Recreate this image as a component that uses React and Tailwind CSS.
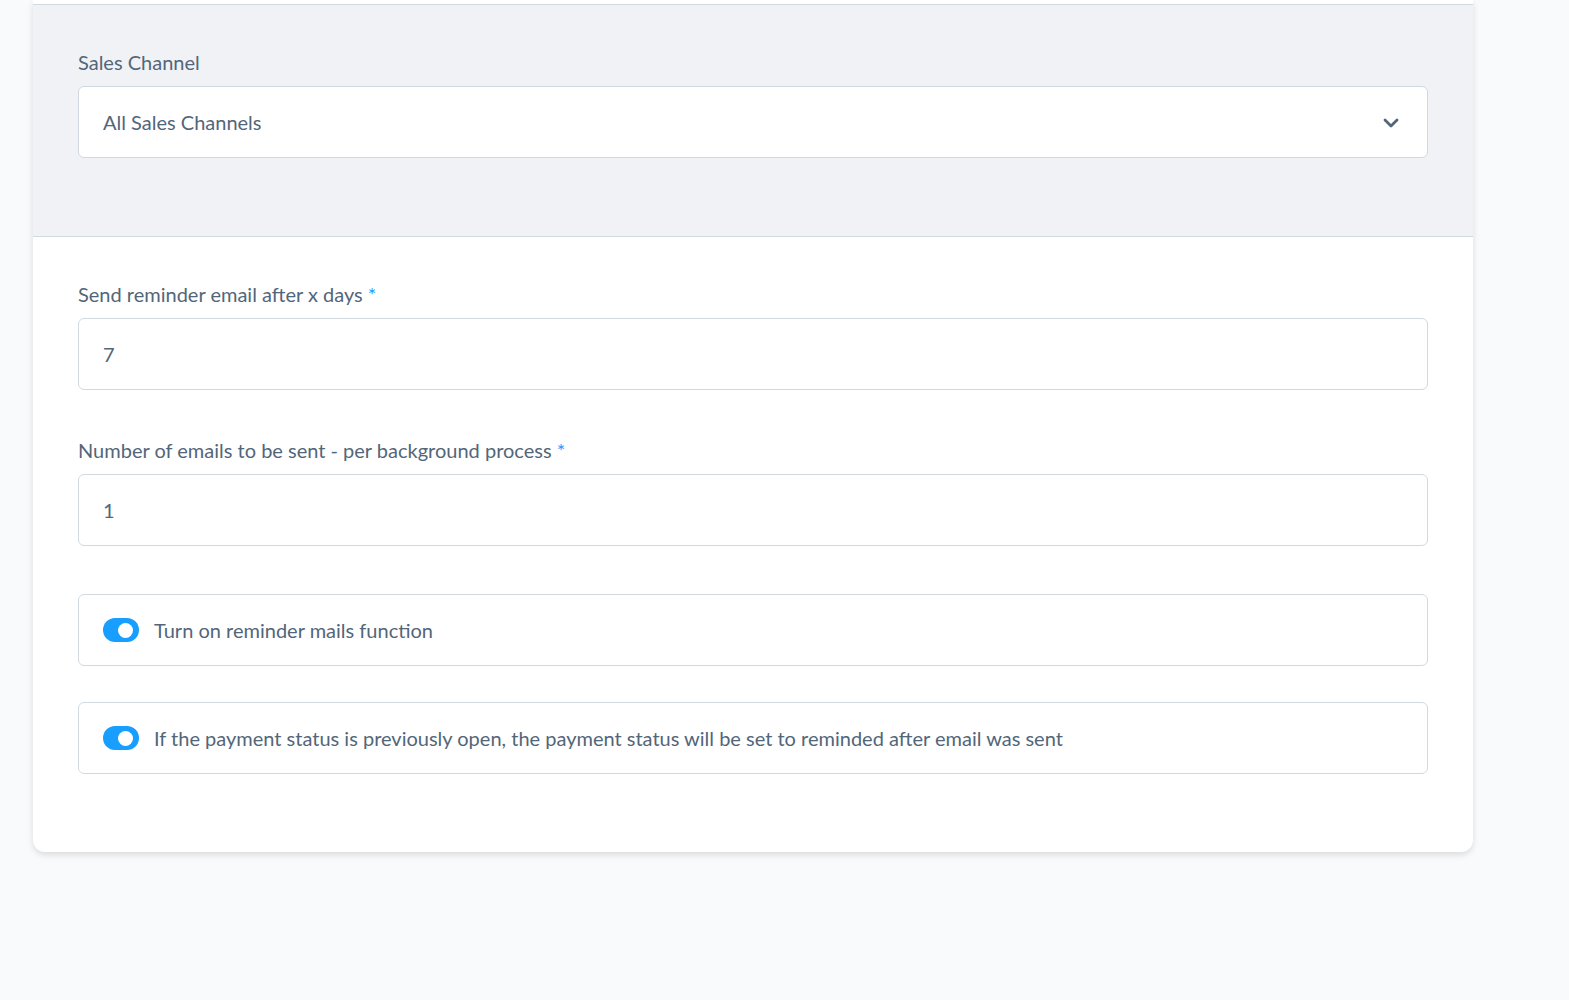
import React from "react";

const font = { fontFamily: "Lato, 'Noto Sans', sans-serif" };

function Label({ children, required }) {
  return (
    <div className="h-[30px] mb-[9px] flex items-center text-[20px] leading-[30px] text-[#52667a]">
      <span>{children}</span>
      {required && <span className="ml-[5px] text-[#189eff] text-[20px] leading-[30px]">*</span>}
    </div>
  );
}

function Input({ value }) {
  return (
    <div className="h-[72px] border border-[#d1d9e0] rounded-[6px] bg-white flex items-center px-[24px] text-[20px] text-[#52667a]">
      {value}
    </div>
  );
}

function Toggle({ label }) {
  return (
    <div className="h-[72px] border border-[#d1d9e0] rounded-[6px] bg-white flex items-center pl-[24px] text-[20px] text-[#52667a]">
      <div className="w-[36px] h-[24px] rounded-full bg-[#189eff] flex items-center justify-end pr-[6px] shrink-0">
        <div className="w-[15px] h-[15px] rounded-full bg-white" />
      </div>
      <span className="ml-[15px]">{label}</span>
    </div>
  );
}

export default function App() {
  return (
    <div className="min-h-[1000px] bg-[#f9fafb] pl-[33px]" style={font}>
      <div className="w-[1440px] bg-white rounded-b-[12px] shadow-[0_3px_6px_0_rgba(0,0,0,0.12)] pt-[4px] overflow-hidden">
        <div className="border-t border-b border-[#d1d9e0] bg-[#f0f2f5] px-[45px] pt-[42px] pb-[78px]">
          <Label>Sales Channel</Label>
          <div className="h-[72px] border border-[#d1d9e0] rounded-[6px] bg-white flex items-center justify-between pl-[24px] pr-[28px] text-[20px] text-[#52667a]">
            <span>All Sales Channels</span>
            <svg width="16" height="10" viewBox="0 0 16 10" fill="none" className="mt-[2px]">
              <path d="M2 2l6 6 6-6" stroke="#52667a" strokeWidth="2.8" strokeLinecap="round" strokeLinejoin="round" />
            </svg>
          </div>
        </div>
        <div className="px-[45px] pt-[42px] pb-[78px]">
          <Label required>Send reminder email after x days</Label>
          <Input value="7" />
          <div className="h-[45px]" />
          <Label required>Number of emails to be sent - per background process</Label>
          <Input value="1" />
          <div className="h-[48px]" />
          <Toggle label="Turn on reminder mails function" />
          <div className="h-[36px]" />
          <Toggle label="If the payment status is previously open, the payment status will be set to reminded after email was sent" />
        </div>
      </div>
    </div>
  );
}
